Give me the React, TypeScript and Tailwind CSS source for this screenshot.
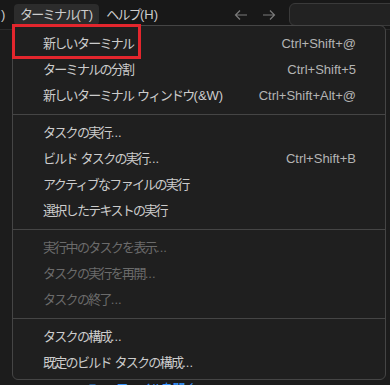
import React from 'react';

type Item =
  | { kind: 'item'; label: string; shortcut?: string; disabled?: boolean }
  | { kind: 'sep' };

const items: Item[] = [
  { kind: 'item', label: '新しいターミナル', shortcut: 'Ctrl+Shift+@' },
  { kind: 'item', label: 'ターミナルの分割', shortcut: 'Ctrl+Shift+5' },
  { kind: 'item', label: '新しいターミナル ウィンドウ(&W)', shortcut: 'Ctrl+Shift+Alt+@' },
  { kind: 'sep' },
  { kind: 'item', label: 'タスクの実行...' },
  { kind: 'item', label: 'ビルド タスクの実行...', shortcut: 'Ctrl+Shift+B' },
  { kind: 'item', label: 'アクティブなファイルの実行' },
  { kind: 'item', label: '選択したテキストの実行' },
  { kind: 'sep' },
  { kind: 'item', label: '実行中のタスクを表示...', disabled: true },
  { kind: 'item', label: 'タスクの実行を再開...', disabled: true },
  { kind: 'item', label: 'タスクの終了...', disabled: true },
  { kind: 'sep' },
  { kind: 'item', label: 'タスクの構成...' },
  { kind: 'item', label: '既定のビルド タスクの構成...' },
];

const jp = "font-['Liberation_Sans','Noto_Sans_CJK_JP',sans-serif]";

// Japanese glyphs in the screenshot are narrower than Noto's full-width ones,
// so tighten only the CJK runs and leave latin text alone.
function Jp({ text }: { text: string }) {
  const parts = text.split(/([\u3000-\u9fff\uff00-\uffef]+)/);
  return (
    <span>
      {parts.map((p, i) =>
        /[\u3000-\u9fff\uff00-\uffef]/.test(p) ? (
          <span key={i} className="tracking-[-1.7px]">{p}</span>
        ) : (
          <span key={i}>{p}</span>
        )
      )}
    </span>
  );
}

export default function App() {
  return (
    <div className={`relative w-[390px] h-[385px] overflow-hidden bg-[#1c1c1c] text-[13px] ${jp}`}>
      {/* title bar */}
      <div className="flex items-center h-[30px] bg-[#181818] border-b border-[#2b2b2b] text-[#cccccc] whitespace-nowrap">
        <span className="pl-[1px] w-[14px] shrink-0">)</span>
        <span className="flex items-center shrink-0 h-[21px] px-[6px] rounded-[4px] bg-[#2c2c2c]">
          <Jp text="ターミナル(T)" />
        </span>
        <span className="ml-[7px] shrink-0">
          <Jp text="ヘルプ(H)" />
        </span>
        <div className="flex items-center gap-[12px] ml-[75px] shrink-0 text-[#7a7a7a]">
          <svg width="16" height="16" viewBox="0 0 16 16" fill="none" stroke="currentColor" strokeWidth="1.2">
            <path d="M14 8H2.5M7 3.5L2.5 8L7 12.5" />
          </svg>
          <svg width="16" height="16" viewBox="0 0 16 16" fill="none" stroke="currentColor" strokeWidth="1.2">
            <path d="M2 8h11.5M9 3.5L13.5 8L9 12.5" />
          </svg>
        </div>
        <div className="ml-[12px] h-[23px] w-[110px] shrink-0 rounded-[6px] border border-[#3a3a3a] bg-[#222222]" />
      </div>

      {/* editor area behind */}
      <div className="flex items-center gap-[10px] pl-[88px] pt-[349px] text-[#3794ff] whitespace-nowrap">
        <svg width="18" height="16" viewBox="0 0 18 16" fill="none" stroke="currentColor" strokeWidth="1.2">
          <path d="M2 4h5l2 2h7v8H2z" />
        </svg>
        <Jp text="ファイルを開く" />
      </div>

      {/* dropdown menu */}
      <div className="absolute left-[12px] top-[25px] w-[374px] h-[355px] rounded-[6px] border border-[#454545] bg-[#1f1f1f] pt-[5px] pb-[4px] whitespace-nowrap">
        {items.map((it, i) =>
          it.kind === 'sep' ? (
            <div key={i} className="h-[11px] flex items-center">
              <div className="w-full h-px bg-[#454545]" />
            </div>
          ) : (
            <div
              key={i}
              className={`flex items-center justify-between h-[26px] pl-[30px] pr-[29px] ${
                it.disabled ? 'text-[#6b6b6b]' : 'text-[#cccccc]'
              }`}
            >
              <Jp text={it.label} />
              {it.shortcut && <span className="text-[#b4b4b4]">{it.shortcut}</span>}
            </div>
          )
        )}
      </div>

      {/* red annotation box */}
      <div className="absolute left-[12px] top-[24px] w-[129px] h-[35px] border-[3px] border-[#e3262d]" />
    </div>
  );
}
